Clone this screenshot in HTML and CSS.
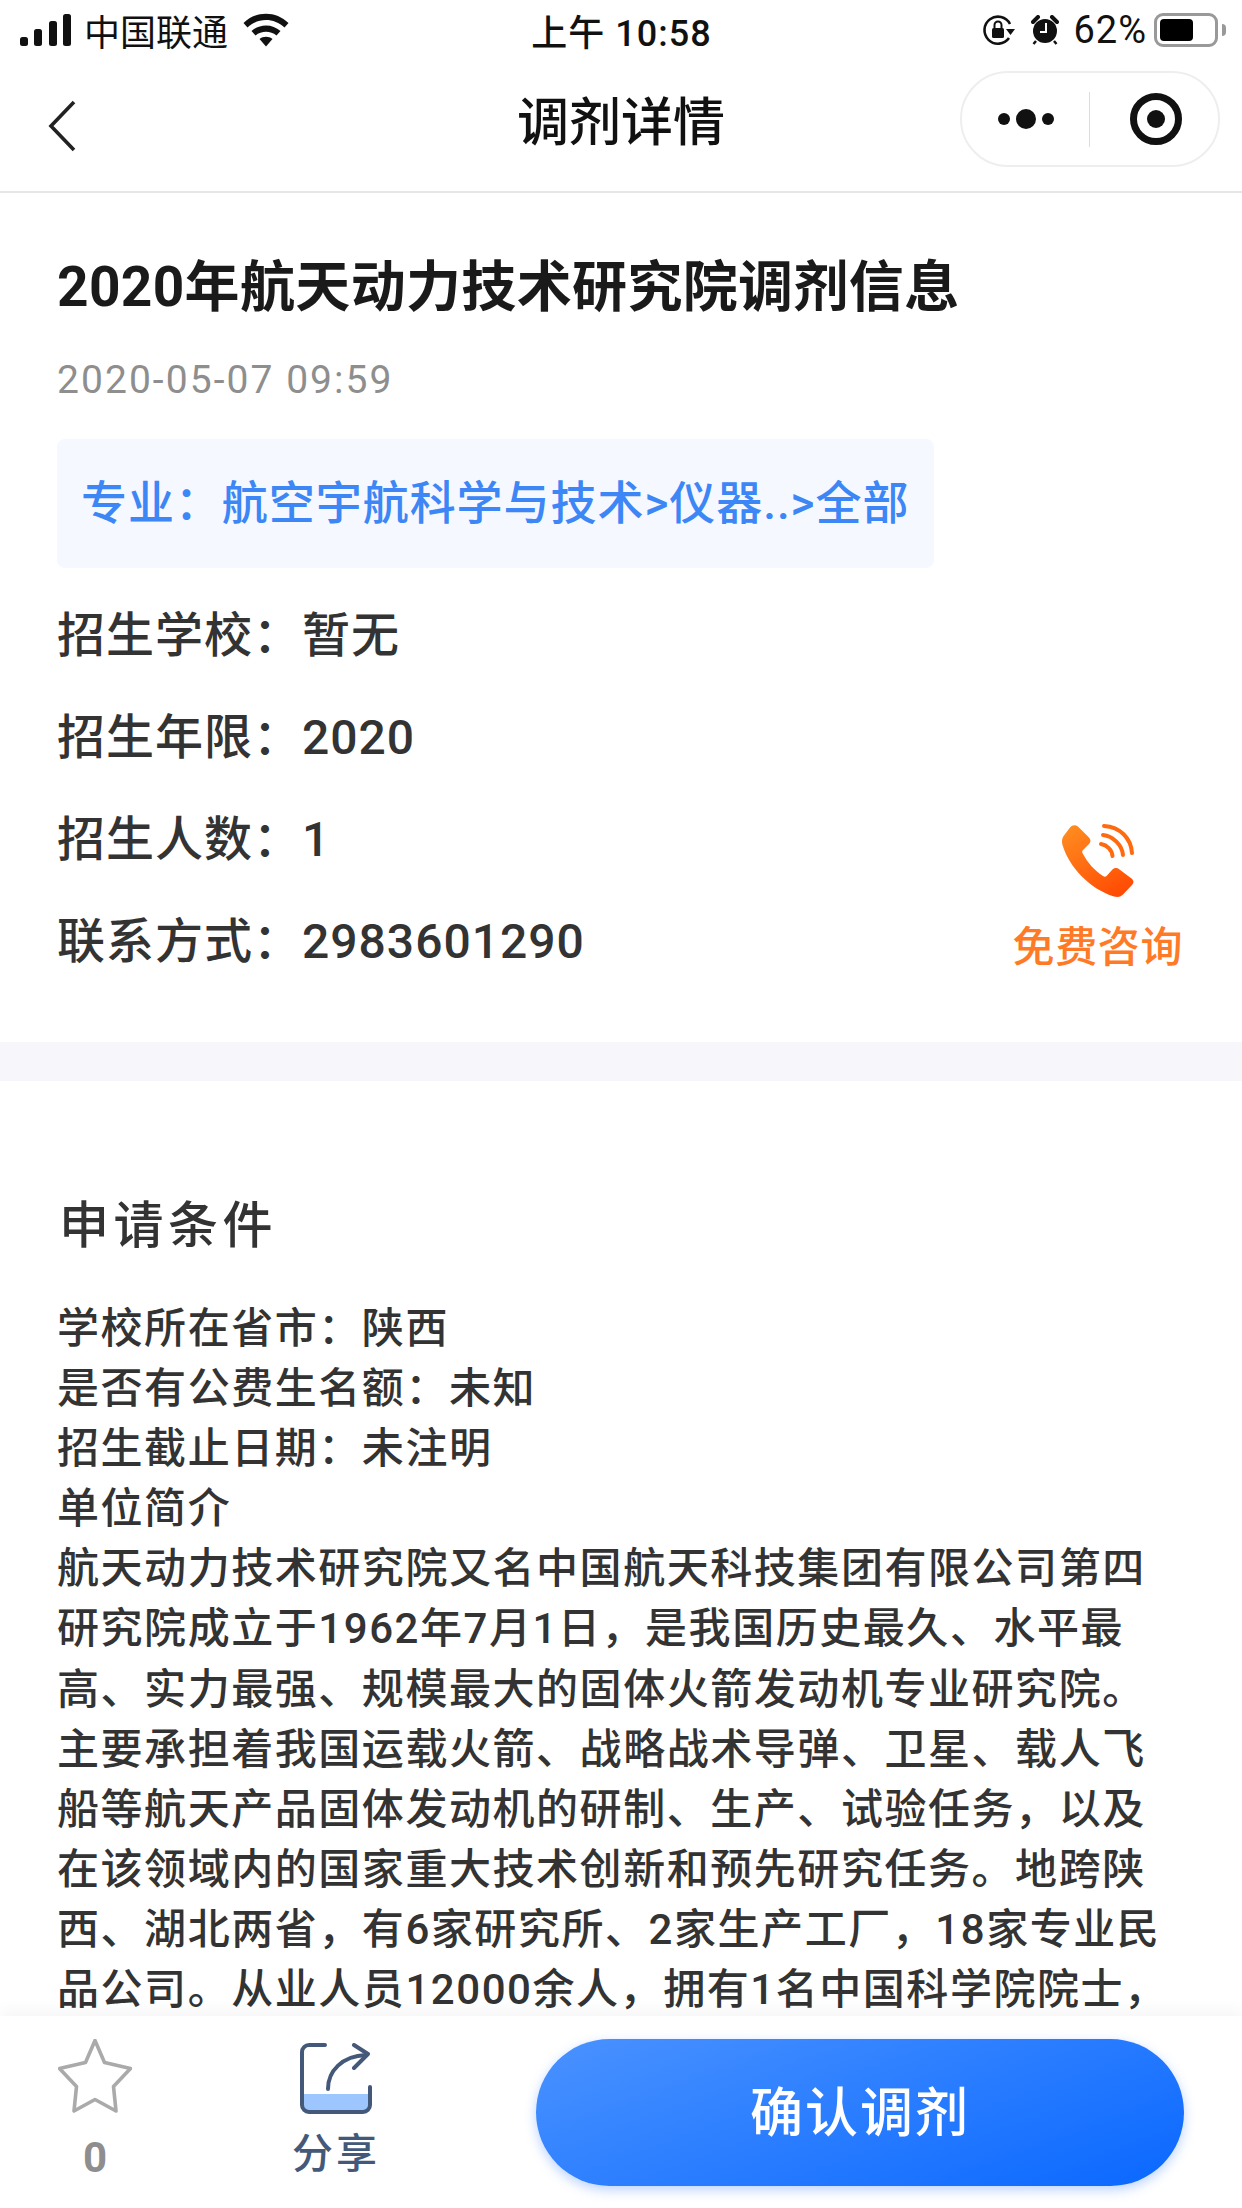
FILE: index.html

```html
<!DOCTYPE html>
<html lang="zh-CN">
<head>
  <meta charset="UTF-8">
  <meta name="viewport" content="width=device-width, initial-scale=1.0">
  <title>调剂详情</title>
  <link rel="stylesheet" href="styles.css">
</head>
<body>
  <div class="page">
    <div class="statusbar">
      <div class="status-left">
        <svg class="signal" viewBox="0 0 51 32"><rect x="0" y="23" width="8" height="9" rx="2.5"/><rect x="14" y="15" width="8" height="17" rx="2.5"/><rect x="29" y="7" width="8" height="25" rx="2.5"/><rect x="43" y="0" width="8" height="32" rx="2.5"/></svg>
        <span class="carrier">中国联通</span>
        <svg class="wifi" viewBox="0 0 46 34"><path d="M0.5 10 C13 -2.5 33 -2.5 45.5 10 L41.5 14.5 C31 4.5 15 4.5 4.5 14.5 Z"/><path d="M8.5 18 C16.5 10.5 29.5 10.5 37.5 18 L33.5 22.5 C27.5 17.5 18.5 17.5 12.5 22.5 Z"/><path d="M16.5 26 C20 23 26 23 29.5 26 L23 33.5 Z"/></svg>
      </div>
      <div class="status-time">上午 10:58</div>
      <div class="status-right">
        <svg class="lock" viewBox="0 0 34 32"><path d="M27 24 A13.5 13.5 0 1 1 28 10" fill="none" stroke="#111" stroke-width="2.6"/><path d="M24 15 H33 L28.5 21 Z" fill="#111"/><rect x="10" y="14" width="12" height="10" rx="1.5" fill="#111"/><path d="M12.5 14 V11 a3.5 3.5 0 0 1 7 0 V14" fill="none" stroke="#111" stroke-width="2"/></svg>
        <svg class="alarm" viewBox="0 0 28 30"><circle cx="14" cy="16" r="12" fill="#111"/><path d="M2 7 L7 2 M26 7 L21 2" stroke="#111" stroke-width="4" stroke-linecap="round"/><path d="M5 26 L2.5 29 M23 26 L25.5 29" stroke="#111" stroke-width="2.5"/><path d="M15 8 V17 H9" fill="none" stroke="#fff" stroke-width="2"/></svg>
        <span class="percent">62%</span>
        <div class="battery"><div class="battery-fill"></div></div>
        <div class="battery-nub"></div>
      </div>
    </div>

    <header class="navbar">
      <svg class="back" viewBox="0 0 28 52"><path d="M26 2 L3 26 L26 50" fill="none" stroke="#222" stroke-width="3.6"/></svg>
      <h1 class="nav-title">调剂详情</h1>
      <div class="capsule">
        <div class="capsule-dots"><i class="dot"></i><i class="dot big"></i><i class="dot"></i></div>
        <div class="capsule-line"></div>
        <div class="capsule-record"><i></i></div>
      </div>
    </header>

    <main class="content">
      <section class="summary">
        <h2 class="title">2020年航天动力技术研究院调剂信息</h2>
        <p class="date">2020-05-07 09:59</p>
        <div class="major">专业：航空宇航科学与技术&gt;仪器..&gt;全部</div>
        <div class="info-wrap">
          <ul class="info">
            <li>招生学校：暂无</li>
            <li>招生年限：2020</li>
            <li>招生人数：1</li>
            <li>联系方式：2983601290</li>
          </ul>
          <div class="consult">
            <svg class="phone" viewBox="0 0 72 74">
              <defs><linearGradient id="orange" x1="0.2" y1="0" x2="0.8" y2="1"><stop offset="0" stop-color="#ff8a1f"/><stop offset="1" stop-color="#ff4a03"/></linearGradient></defs>
              <path fill="url(#orange)" d="M8 3.5 C10.5 0.5 14 0.5 16.5 3 L26.5 13 C29 15.5 29 18 27 20 L20.5 26.5 C20 27.5 20 28.5 21 30 C26 39 32 46 41 52 C42.5 53 43.5 52.8 44.5 52 L50 46 C52.5 43.5 55 43.5 57.5 45.5 L69.5 54.5 C72 56.5 72 59 70 61 L61 70.5 C58.5 73 55.5 73.5 52 72.5 C28 65 7 43 0.5 21 C-0.5 17.5 0 14 2 11.5 Z"/>
              <g fill="none" stroke="#ff6a10" stroke-width="4" stroke-linecap="round"><path d="M42 2 C58 3 69 14 70 29"/><path d="M41 11 C51 12 60 21 61 31"/><path d="M39 20 C45 21 50 26 50.5 32"/></g>
            </svg>
            <span class="consult-text">免费咨询</span>
          </div>
        </div>
      </section>

      <div class="divider"></div>

      <section class="detail">
        <h3 class="detail-title">申请条件</h3>
        <p class="detail-text">学校所在省市：陕西<br>是否有公费生名额：未知<br>招生截止日期：未注明<br>单位简介<br>航天动力技术研究院又名中国航天科技集团有限公司第四<br>研究院成立于1962年7月1日，是我国历史最久、水平最<br>高、实力最强、规模最大的固体火箭发动机专业研究院。<br>主要承担着我国运载火箭、战略战术导弹、卫星、载人飞<br>船等航天产品固体发动机的研制、生产、试验任务，以及<br>在该领域内的国家重大技术创新和预先研究任务。地跨陕<br>西、湖北两省，有6家研究所、2家生产工厂，18家专业民<br>品公司。从业人员12000余人，拥有1名中国科学院院士，</p>
      </section>
    </main>

    <footer class="bottombar">
      <div class="fav">
        <svg class="star" viewBox="0 0 74 75"><path d="M37 1.5 L46.5 23.5 L72.5 29.5 L55.5 47.5 L58 72 L37 60.5 L16 72 L18.5 47.5 L1.5 29.5 L27.5 23.5 Z" fill="none" stroke="#aaa" stroke-width="3.6" stroke-linejoin="round"/></svg>
        <span class="fav-count">0</span>
      </div>
      <div class="share">
        <svg class="share-icon" viewBox="0 0 72 71">
          <path d="M2 51 H70 V62 a7 7 0 0 1 -7 7 H9 a7 7 0 0 1 -7 -7 Z" fill="#9dc6ff"/>
          <g fill="none" stroke="#44597a" stroke-width="4" stroke-linecap="round" stroke-linejoin="round"><path d="M25 2 H9 a7 7 0 0 0 -7 7 V62 a7 7 0 0 0 7 7 H63 a7 7 0 0 0 7 -7 V44"/><path d="M28 46 C28 28 42 13 66 12"/><path d="M54 2 L68 11 L54 25"/></g>
        </svg>
        <span class="share-text">分享</span>
      </div>
      <div class="confirm">确认调剂</div>
    </footer>
  </div>
</body>
</html>
```

FILE: styles.css

```css
* {
  box-sizing: border-box;
}

html, body {
  margin: 0;
  padding: 0;
}

body {
  font-family: Roboto, 'Noto Sans CJK SC', sans-serif;
  background-color: #fff;
  color: #333;
}

.page {
  width: 1242px;
  height: 2208px;
  display: flex;
  flex-direction: column;
  overflow: hidden;
}

/* status bar */
.statusbar {
  height: 60px;
  flex: none;
  padding: 0 16px 0 20px;
  display: grid;
  grid-template-columns: 1fr auto 1fr;
  align-items: center;
  color: #111;
}

.status-left, .status-right {
  display: flex;
  align-items: center;
}

.status-right {
  justify-content: flex-end;
}

.signal {
  width: 51px;
  height: 32px;
  fill: #111;
}

.carrier {
  margin-left: 13px;
  font-size: 36px;
}

.wifi {
  width: 46px;
  height: 34px;
  margin-left: 15px;
  fill: #111;
}

.status-time {
  margin-right: 3px;
  font-size: 36px;
  font-weight: 500;
  letter-spacing: 1px;
}

.lock {
  width: 34px;
  height: 32px;
}

.alarm {
  width: 28px;
  height: 30px;
  margin-left: 15px;
}

.percent {
  margin-left: 14px;
  font-size: 38px;
  letter-spacing: 1px;
}

.battery {
  width: 64px;
  height: 34px;
  margin-left: 7px;
  padding: 3px;
  border: 3px solid #999;
  border-radius: 9px;
}

.battery-fill {
  width: 33px;
  height: 100%;
  background-color: #000;
  border-radius: 4px;
}

.battery-nub {
  width: 4px;
  height: 12px;
  margin-left: 4px;
  background-color: #999;
  border-radius: 0 4px 4px 0;
}

/* nav bar */
.navbar {
  height: 133px;
  flex: none;
  padding: 12px 22px 26px;
  display: grid;
  grid-template-columns: 1fr auto 1fr;
  align-items: center;
  border-bottom: 2px solid #e6e6e6;
}

.back {
  width: 28px;
  height: 52px;
  margin: 12px 0 0 26px;
}

.nav-title {
  margin: -2px 0 0;
  font-size: 52px;
  font-weight: 500;
  color: #111;
}

.capsule {
  justify-self: end;
  width: 260px;
  height: 96px;
  margin-top: -1px;
  display: flex;
  align-items: center;
  border: 2px solid #eee;
  border-radius: 48px;
}

.capsule-dots {
  width: 127px;
  display: flex;
  align-items: center;
  justify-content: center;
  gap: 6px;
}

.dot {
  width: 12px;
  height: 12px;
  background-color: #111;
  border-radius: 50%;
}

.dot.big {
  width: 20px;
  height: 20px;
}

.capsule-line {
  width: 1px;
  height: 55px;
  background-color: #ddd;
}

.capsule-record {
  width: 52px;
  height: 52px;
  margin-left: 40px;
  display: flex;
  align-items: center;
  justify-content: center;
  border: 7px solid #111;
  border-radius: 50%;
}

.capsule-record i {
  width: 18px;
  height: 18px;
  background-color: #111;
  border-radius: 50%;
}

/* content */
.content {
  flex: 1;
  min-height: 0;
  overflow: hidden;
}

.summary {
  height: 849px;
  padding: 55px 57px 0;
}

.title {
  margin: 0;
  font-size: 55px;
  line-height: 78px;
  font-weight: 700;
  letter-spacing: 0.35px;
  color: #1a1a1a;
}

.date {
  margin: 29px 0 0;
  font-size: 39px;
  line-height: 50px;
  letter-spacing: 2.05px;
  color: #8e8e8e;
}

.major {
  width: 877px;
  height: 129px;
  margin-top: 34px;
  padding-left: 24px;
  font-size: 46px;
  line-height: 129px;
  font-weight: 500;
  letter-spacing: 0.95px;
  color: #3c86f5;
  background-color: #f5f8ff;
  border-radius: 8px;
}

.info-wrap {
  margin-top: 17px;
  display: flex;
  justify-content: space-between;
  align-items: flex-end;
}

.info {
  margin: 0;
  padding: 0;
  list-style: none;
  font-size: 48px;
  line-height: 102px;
  font-weight: 500;
  letter-spacing: 1px;
}

.consult {
  margin-right: 2px;
  display: flex;
  flex-direction: column;
  align-items: center;
  padding-bottom: 17px;
}

.phone {
  width: 72px;
  height: 74px;
}

.consult-text {
  margin-top: 22px;
  font-size: 42px;
  line-height: 56px;
  font-weight: 500;
  letter-spacing: 0.6px;
  color: #ff7a26;
}

.divider {
  height: 39px;
  background-color: #f6f6fb;
}

.detail {
  padding: 112px 57px 0;
}

.detail-title {
  margin: 0 0 0 2px;
  font-size: 50px;
  line-height: 66px;
  font-weight: 500;
  letter-spacing: 4.5px;
  color: #333;
}

.detail-text {
  margin: 40px 0 0;
  font-size: 42px;
  line-height: 60.1px;
  font-weight: 500;
  letter-spacing: 1.55px;
  white-space: nowrap;
  color: #333;
}

/* bottom bar */
.bottombar {
  position: relative;
  height: 192px;
  flex: none;
  padding: 23px 58px 0 0;
  display: flex;
  background-color: #fff;
  box-shadow: 0 -6px 14px rgba(0, 0, 0, 0.04);
}

.fav {
  width: 190px;
  display: flex;
  flex-direction: column;
  align-items: center;
  color: #8e8e8e;
}

.star {
  width: 74px;
  height: 75px;
}

.fav-count {
  margin-top: 20px;
  font-size: 42px;
  line-height: 48px;
  font-weight: 700;
}

.share {
  width: 292px;
  display: flex;
  flex-direction: column;
  align-items: center;
  color: #44597a;
}

.share-icon {
  width: 72px;
  height: 71px;
  margin-top: 4px;
}

.share-text {
  margin-top: 14px;
  font-size: 41px;
  line-height: 52px;
  font-weight: 500;
  letter-spacing: 3px;
}

.confirm {
  width: 648px;
  height: 147px;
  margin-left: 54px;
  padding-top: 2px;
  font-size: 53px;
  line-height: 147px;
  font-weight: 500;
  letter-spacing: 2px;
  text-align: center;
  color: #fff;
  background: linear-gradient(160deg, #4a92ff, #0a68ff);
  border-radius: 74px;
  box-shadow: 0 4px 12px rgba(30, 110, 255, 0.3);
}
```
